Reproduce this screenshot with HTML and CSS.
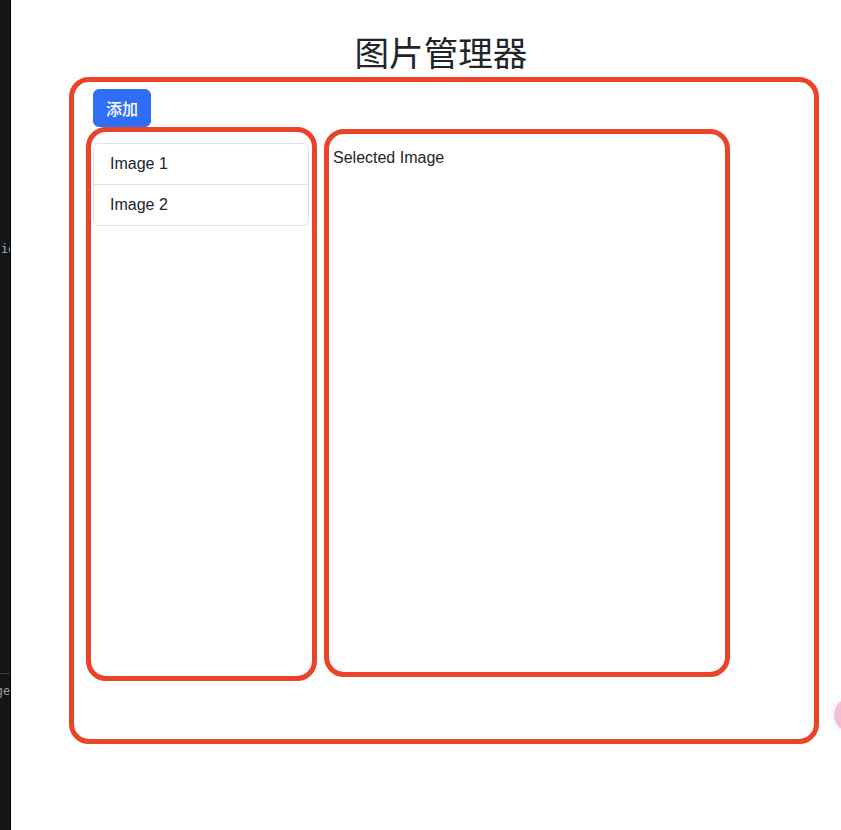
FILE: index.html
```html
<!DOCTYPE html>
<html lang="zh">
<head>
  <meta charset="UTF-8">
  <title>图片管理器</title>
  <meta name="viewport" content="width=device-width, initial-scale=1.0">
  <link rel="stylesheet" href="styles.css">
</head>
<body>

  <div class="devtools">
    <div class="dev-line code-line">id</div>
    <div class="dev-rule"></div>
    <div class="dev-line name-line">image</div>
  </div>

  <div class="page">
    <h1 class="title">图片管理器</h1>

    <div class="frame">
      <button type="button" class="btn-add">添加</button>

      <div class="panes">
        <div class="list-box">
          <ul class="list-group">
            <li class="list-item">Image 1</li>
            <li class="list-item">Image 2</li>
          </ul>
        </div>

        <div class="view-box">
          <p class="selected">Selected Image</p>
        </div>
      </div>
    </div>
  </div>

  <div class="float-bubble"></div>

</body>
</html>
```

FILE: styles.css
```css
html, body {
  margin: 0;
  height: 100%;
}

body {
  display: flex;
  overflow: hidden;
  background: #fff;
  color: #212529;
  font-family: "Liberation Sans", Arial, "Noto Sans CJK SC", sans-serif;
  font-size: 16px;
  line-height: 24px;
}

/* dark editor strip on the left edge */
.devtools {
  flex: 0 0 11px;
  width: 11px;
  overflow: hidden;
  background: #151515;
  border-right: 1px solid #000;
  box-sizing: border-box;
  font-family: "DejaVu Sans Mono", monospace;
  font-size: 12px;
  line-height: 14px;
}

.dev-line {
  white-space: nowrap;
}

.code-line {
  margin-top: 242px;
  padding-left: 1px;
  color: #8fb4cf;
}

.dev-rule {
  margin-top: 417px;
  height: 1px;
  width: 60px;
  background: #3a3a3a;
}

.name-line {
  margin-top: 10px;
  margin-left: -26px;
  color: #9a9a9a;
}

.page {
  flex: 0 0 860px;
  width: 860px;
  padding-top: 31px;
}

.title {
  margin: 0;
  text-align: center;
  font-family: "Noto Sans CJK SC", sans-serif;
  font-size: 34.6px;
  font-weight: 400;
  line-height: 41.5px;
}

.frame {
  box-sizing: border-box;
  margin: 4.5px 0 0 58px;
  width: 750px;
  height: 667px;
  padding: 7px 0 0 12px;
  border: 5px solid #ea4328;
  border-radius: 20px;
}

.btn-add {
  display: block;
  margin-left: 7px;
  padding: 6px 12px;
  border: 1px solid #2f6ef5;
  border-radius: 6px;
  background-color: #2f6ef5;
  color: #fff;
  font-family: "Noto Sans CJK SC", sans-serif;
  font-size: 16px;
  font-weight: 500;
  line-height: 24px;
  cursor: pointer;
}

.panes {
  display: flex;
  align-items: flex-start;
}

.list-box {
  box-sizing: border-box;
  width: 231px;
  height: 554px;
  padding: 11px 3px 0 2px;
  border: 5px solid #ea4328;
  border-radius: 20px;
}

.list-group {
  margin: 0;
  padding: 0;
  list-style: none;
  border: 1px solid #dee2e6;
  border-radius: 6px;
}

.list-item {
  padding: 8px 16px;
}

.list-item + .list-item {
  border-top: 1px solid #dee2e6;
}

.view-box {
  box-sizing: border-box;
  width: 406px;
  height: 548px;
  margin: 2px 0 0 7px;
  padding: 12px 4px;
  border: 5px solid #ea4328;
  border-radius: 20px;
}

.selected {
  margin: 0;
}

.float-bubble {
  position: absolute;
  left: 834px;
  top: 698px;
  width: 34px;
  height: 34px;
  border-radius: 50%;
  background: #f5bdd8;
  box-shadow: 0 0 10px rgba(0,0,0,0.08);
}
```
